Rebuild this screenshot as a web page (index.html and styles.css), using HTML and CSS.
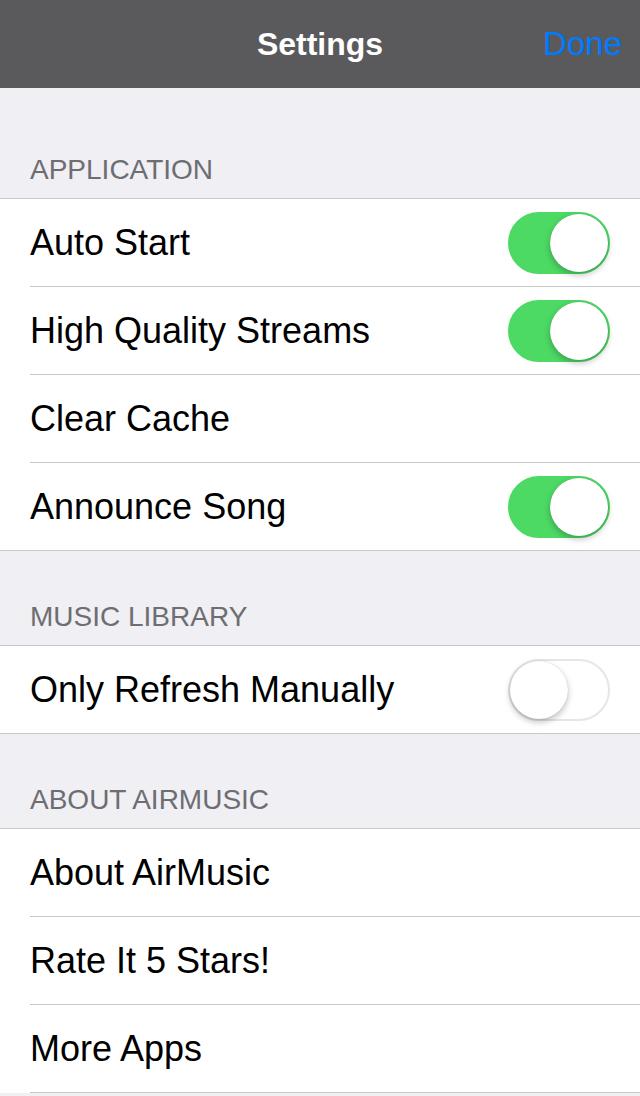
FILE: index.html
```html
<!DOCTYPE html>
<html lang="en">

<head>
    <meta charset="UTF-8">
    <meta name="viewport" content="width=device-width, initial-scale=1.0">
    <link rel="stylesheet" href="styles.css">
    <title>Settings</title>
</head>

<body>
    <div class="navbar">
        <h1 class="nav-title">Settings</h1>
        <button class="nav-done">Done</button>
    </div>

    <div class="section first">
        <h2 class="section-title">APPLICATION</h2>
        <div class="group">
            <div class="row">
                <span class="label">Auto Start</span>
                <span class="switch on"><span class="knob"></span></span>
            </div>
            <div class="row">
                <span class="label">High Quality Streams</span>
                <span class="switch on"><span class="knob"></span></span>
            </div>
            <div class="row">
                <span class="label">Clear Cache</span>
            </div>
            <div class="row">
                <span class="label">Announce Song</span>
                <span class="switch on"><span class="knob"></span></span>
            </div>
        </div>
    </div>

    <div class="section">
        <h2 class="section-title">MUSIC LIBRARY</h2>
        <div class="group">
            <div class="row">
                <span class="label">Only Refresh Manually</span>
                <span class="switch"><span class="knob"></span></span>
            </div>
        </div>
    </div>

    <div class="section">
        <h2 class="section-title">ABOUT AIRMUSIC</h2>
        <div class="group open">
            <div class="row">
                <span class="label">About AirMusic</span>
            </div>
            <div class="row">
                <span class="label">Rate It 5 Stars!</span>
            </div>
            <div class="row">
                <span class="label">More Apps</span>
            </div>
        </div>
    </div>
</body>

</html>
```

FILE: styles.css
```css
body {
    margin: 0;
    height: 100vh;
    overflow: hidden;
    font-family: "Liberation Sans", Arial, sans-serif;
    background-color: #efeff4;
}

.navbar {
    height: 88px;
    background-color: #5a5a5c;
    display: flex;
    align-items: center;
    justify-content: center;
    position: relative;
}

.nav-title {
    margin: 0;
    color: #fff;
    font-size: 32px;
    font-weight: bold;
}

.nav-done {
    position: absolute;
    right: 18px;
    top: 24px;
    padding: 0;
    background: none;
    border: none;
    color: #007aff;
    font-family: inherit;
    font-size: 33px;
    line-height: 40px;
}

.section.first {
    margin-top: 16px;
}

.section-title {
    margin: 0;
    padding: 50px 30px 12px;
    font-size: 28px;
    line-height: 32px;
    font-weight: normal;
    color: #6d6d72;
}

.group {
    background-color: #fff;
    border-top: 1px solid #c8c7cc;
    border-bottom: 1px solid #c8c7cc;
}

.group.open {
    border-bottom: none;
}

.row {
    height: 87px;
    margin-left: 30px;
    padding-right: 30px;
    display: flex;
    align-items: center;
    justify-content: space-between;
    border-bottom: 1px solid #c8c7cc;
}

.row:last-child {
    border-bottom: none;
}

.group.open .row:last-child {
    border-bottom: 1px solid #c8c7cc;
}

.label {
    font-size: 36px;
    color: #000;
}

.switch {
    width: 102px;
    height: 62px;
    box-sizing: border-box;
    border-radius: 31px;
    border: 2px solid #e5e5ea;
    background-color: #fff;
    position: relative;
}

.switch.on {
    border-color: #4cd964;
    background-color: #4cd964;
}

.knob {
    position: absolute;
    top: 0;
    left: 0;
    width: 58px;
    height: 58px;
    border-radius: 50%;
    background-color: #fff;
    box-shadow: 0 3px 6px rgba(0, 0, 0, 0.25), 0 0 1px rgba(0, 0, 0, 0.2);
}

.switch.on .knob {
    left: auto;
    right: 0;
}
```
